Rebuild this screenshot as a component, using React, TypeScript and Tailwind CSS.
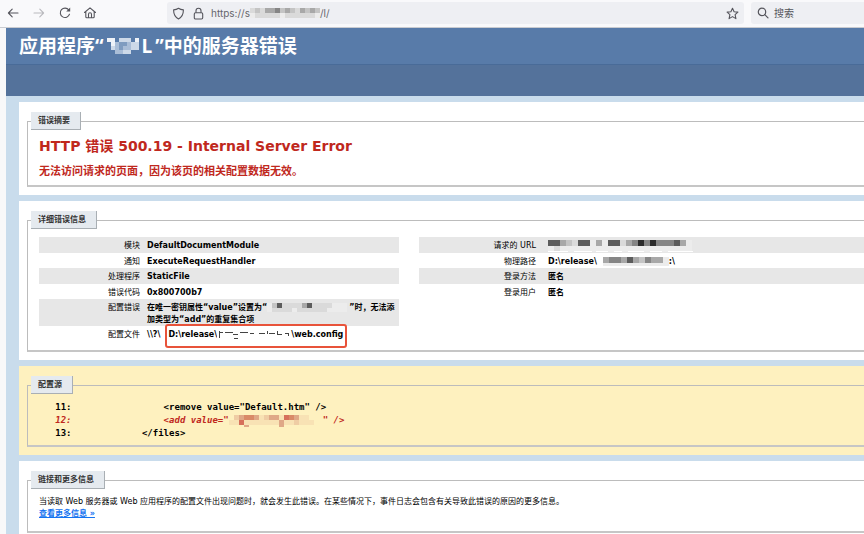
import type { ReactNode } from "react";

const INK: Record<string, string> = {
  "0": "#2b2b2b",
  "1": "#5c5c5c",
  "2": "#858585",
  "3": "#a8a8a8",
  "4": "#c4c4c4",
  "5": "#dadada",
  "6": "#ececec",
  w: "#ffffff",
  a: "#d98a68",
  b: "#dfa887",
  c: "#efcda4",
  d: "#f8e2b4",
  e: "#d6705a",
  m: "#7f9cc0",
  n: "#a9bdd7",
  o: "#cdd9e8",
  p: "#eef2f8",
};

/* Pixelated cover over private text; one character per cell, "." is clear. */
function Mosaic({ rows, cell, w, h, className = "", children }: { rows: string[]; cell: number; w: number; h: number; className?: string; children?: ReactNode }) {
  return (
    <svg aria-hidden="true" width={w} height={h} className={`inline-block shrink-0 ${className}`} shapeRendering="crispEdges">
      {rows.map((row, y) =>
        row.split("").map((c, x) =>
          c === "." ? null : <rect key={`${x}-${y}`} x={x * cell} y={y * cell} width={cell} height={cell} fill={INK[c]} />,
        ),
      )}
      {children}
    </svg>
  );
}

function Panel({ title, tone = "bg-white", className = "", children }: { title: string; tone?: string; className?: string; children: ReactNode }) {
  return (
    <section className={`${tone} pt-[10px] pb-2 pl-2`}>
      <fieldset className={`min-w-0 border border-r-0 border-b-2 border-[#bcbcbc] border-b-[#c6c6c6] pl-[11px] ${className}`}>
        <legend className="-ml-2 h-[18px] border-r border-b border-[#a9afb4] bg-[#e5eaef] pr-[10px] pl-[7px] text-[8px] leading-[18px] font-bold text-[#333]">
          {title}
        </legend>
        {children}
      </fieldset>
    </section>
  );
}

function Row({ label, wide = false, children }: { label: string; wide?: boolean; children: ReactNode }) {
  return (
    <tr className="h-[15px] align-top odd:h-4 odd:bg-[#e7e7e7]">
      <th scope="row" className={`${wide ? "w-[117px]" : "w-[101px]"} pt-[3px] text-right font-normal whitespace-nowrap`}>
        {label}
      </th>
      <td className={`${wide ? "pl-3" : "pl-[7px]"} pt-[3px] font-bold`}>{children}</td>
    </tr>
  );
}

function BrowserBar() {
  return (
    <nav className="flex h-7 items-center border-b border-[#c9cbd0] bg-[#f9f9fb] pb-px text-[#55555c]">
      <div className="flex w-[167px] shrink-0 items-center gap-3 pl-[6px]">
        <button aria-label="后退" className="h-[14px] w-[14px]">
          <svg viewBox="0 0 14 14" fill="none" stroke="currentColor" strokeWidth="1.1" strokeLinecap="round" strokeLinejoin="round"><path d="M12 7H2.5M6.2 3.2 2.4 7l3.8 3.8" /></svg>
        </button>
        <button aria-label="前进" className="h-[14px] w-[14px] text-[#b9b9be]">
          <svg viewBox="0 0 14 14" fill="none" stroke="currentColor" strokeWidth="1.1" strokeLinecap="round" strokeLinejoin="round"><path d="M2 7h9.5M7.8 3.2 11.6 7l-3.8 3.8" /></svg>
        </button>
        <button aria-label="刷新" className="h-[14px] w-[14px]">
          <svg viewBox="0 0 14 14" fill="none" stroke="currentColor" strokeWidth="1.1" strokeLinecap="round"><path d="M10.8 4A4.700 4.700 0 1 0 11.500 8.200" /><path d="M12.200 1.600v4H8.200z" fill="currentColor" stroke="none" /></svg>
        </button>
        <button aria-label="主页" className="-ml-px h-[14px] w-[14px]">
          <svg viewBox="0 0 14 14" fill="none" stroke="currentColor" strokeWidth="1.1" strokeLinecap="round" strokeLinejoin="round"><path d="M1.500 6.500 7 1.900l5.500 4.600M2.800 5.600v5.200a1 1 0 0 0 1 1h6.400a1 1 0 0 0 1-1V5.600M5.500 11.500V8.300a1.500 1.500 0 0 1 3 0v3.200" /></svg>
        </button>
      </div>
      <div className="flex h-[22px] min-w-0 flex-1 items-center rounded-[3px] bg-[#eeeff3] px-[5px]">
        <svg className="h-[13px] w-[13px] shrink-0" viewBox="0 0 13 13" fill="none" stroke="currentColor" strokeWidth="1.1" strokeLinejoin="round"><path d="M6.500 1.200c1.500 1 3.200 1.500 4.900 1.700 0 4.200-1.400 7.100-4.900 9-3.500-1.900-4.900-4.800-4.900-9 1.700-.2 3.400-.7 4.900-1.700z" /></svg>
        <svg className="ml-[7px] h-[13px] w-[13px] shrink-0" viewBox="0 0 13 13" fill="none" stroke="currentColor" strokeWidth="1.100"><rect x="2.300" y="5.800" width="8.400" height="6.200" rx="1.200" /><path d="M4 5.800V3.700a2.500 2.500 0 0 1 5 0v2.100" /></svg>
        <div className="ml-[6px] flex items-center font-['Inter','Noto_Sans_CJK_SC',sans-serif] text-[10px] text-[#66666c]">
          <span>https://s</span>
          <Mosaic rows={["54533243453434", "65555565555556"]} cell={5} w={70} h={10} />
          <span>/l/</span>
        </div>
        <button aria-label="收藏" className="ml-auto h-[13px] w-[13px]">
          <svg viewBox="0 0 13 13" fill="none" stroke="currentColor" strokeWidth="1.100" strokeLinejoin="round"><path d="m6.500 1.200 1.600 3.500 3.800.4-2.800 2.600.8 3.900-3.400-2-3.400 2 .8-3.900L1.100 5.100l3.800-.4z" /></svg>
        </button>
      </div>
      <label className="ml-[7px] flex h-[22px] w-[113px] items-center gap-[5px] rounded-l-[3px] bg-[#eeeff3] pl-[6px]">
        <svg className="h-3 w-3 shrink-0" viewBox="0 0 12 12" fill="none" stroke="currentColor" strokeWidth="1.200" strokeLinecap="round"><circle cx="5" cy="4.900" r="3.700" /><path d="m7.800 7.700 3.200 3.200" /></svg>
        <input aria-label="搜索" placeholder="搜索" className="w-full min-w-0 bg-transparent font-['Noto_Sans_CJK_SC',sans-serif] text-[10px] leading-4 outline-none placeholder:text-[#55555c]" />
      </label>
    </nav>
  );
}

export default function App() {
  return (
    <div className="flex h-screen flex-col overflow-hidden bg-[#f8f8f9] font-['DejaVu_Sans','Noto_Sans_CJK_SC',sans-serif] text-[8px] leading-3 text-black">
      <BrowserBar />
      <div className="ml-[6px] flex min-h-0 flex-1 flex-col bg-[#c9dcec]">
        <header>
          <h1 className="flex h-[37px] items-center border-b border-[#496b98] bg-[#587ba9] pl-[13px] font-['Open_Sans','Noto_Sans_CJK_SC',sans-serif] text-[19px] font-bold whitespace-nowrap text-white">
            应用程序“
            <Mosaic rows={["pp.ooo.p", ".pnmmnoo", ".onmnnoo", "..nnoo.."]} cell={4} w={34} h={16} className="ml-1" />
            <span className="mr-[3px]">L</span>
            ”中的服务器错误
          </h1>
          <div className="h-[31px] bg-[#54729b]" />
        </header>
        <main className="flex flex-1 flex-col gap-[6px] pt-[6px] pl-[13px]">
          <Panel title="错误摘要" className="pb-1">
            <h2 className="mt-[6px] text-[14px] leading-5 font-bold text-[#c0281d]">HTTP 错误 500.19 - Internal Server Error</h2>
            <h3 className="mt-[7px] text-[11px] leading-[18px] font-bold text-[#c0281d]">无法访问请求的页面，因为该页的相关配置数据无效。</h3>
          </Panel>

          <Panel title="详细错误信息" className="pb-[9px]">
            <div className="mt-2 grid grid-cols-[minmax(0,360px)_minmax(0,1fr)] items-start gap-5">
              <table className="w-full table-fixed border-collapse">
                <tbody>
                  <Row label="模块">DefaultDocumentModule</Row>
                  <Row label="通知">ExecuteRequestHandler</Row>
                  <Row label="处理程序">StaticFile</Row>
                  <Row label="错误代码">0x800700b7</Row>
                  <Row label="配置错误">
                    在唯一密钥属性“value”设置为“
                    <Mosaic rows={["6415555315555666", "6555565555556666"]} cell={5} w={82} h={9} className="align-middle" />
                    ”时，无法添加类型为“add”的重复集合项
                  </Row>
                  <Row label="配置文件">
                    <span className="whitespace-nowrap">
                      \\?\
                      <span className="relative ml-2">
                        D:\release\
                        <Mosaic rows={["w"]} cell={74} w={74} h={9} className="align-middle">
                          <path d="M2 1v7M2 2h4M8 2h8M16 4h5M23 2h8M33 3h4M42 3h6M50 1v3M52 3h6M60 1v3h5M68 3h3M71 3v3M17 8h4" stroke="#444" fill="none" />
                        </Mosaic>
                        \web.config
                        <span className="absolute -top-[6px] -right-1 -bottom-[9px] -left-[3px] rounded-[3px] border-2 border-[#e8533a]" />
                      </span>
                    </span>
                  </Row>
                </tbody>
              </table>
              <table className="w-full table-fixed border-collapse">
                <tbody>
                  <Row wide label="请求的 URL">
                    <Mosaic rows={["113451163611532020222136", "656666666666666666666666"]} cell={6} w={146} h={12} className="align-top">
                      <path d="M0 11h20M26 11h18M48 11h12M66 11h8M80 11h16M102 11h12M120 11h25" stroke="#fff" />
                    </Mosaic>
                  </Row>
                  <Row wide label="物理路径">
                    D:\release\
                    <Mosaic rows={["32231342336", "66666666666"]} cell={6} w={66} h={9} className="ml-[6px] align-middle" />
                    :\
                  </Row>
                  <Row wide label="登录方法">匿名</Row>
                  <Row wide label="登录用户">匿名</Row>
                </tbody>
              </table>
            </div>
          </Panel>

          <Panel title="配置源" tone="bg-[#fef1bf]" className="pb-[5px]">
            <pre className="mt-[7px] font-['DejaVu_Sans_Mono',monospace] text-[9px] leading-[13px] font-bold">
              {"   11:                 <remove value=\"Default.htm\" />\n"}
              <span className="text-[#c0281d] italic">
                {"   12:                 <add value=\""}
                <Mosaic rows={[".cbaabdcbbdeabdd.", "ddedddddddbddcddd", "...b......b......"]} cell={5} w={94} h={12} className="align-middle" />
                {"\" />\n"}
              </span>
              {"   13:             </files>"}
            </pre>
          </Panel>

          <Panel title="链接和更多信息" className="pb-[11px]">
            <p className="mt-[7px] whitespace-nowrap">
              当读取 Web 服务器或 Web 应用程序的配置文件出现问题时，就会发生此错误。在某些情况下，事件日志会包含有关导致此错误的原因的更多信息。
            </p>
            <a href="#more" className="block w-fit font-bold text-[#1473f0] underline">查看更多信息 »</a>
          </Panel>
        </main>
      </div>
    </div>
  );
}
